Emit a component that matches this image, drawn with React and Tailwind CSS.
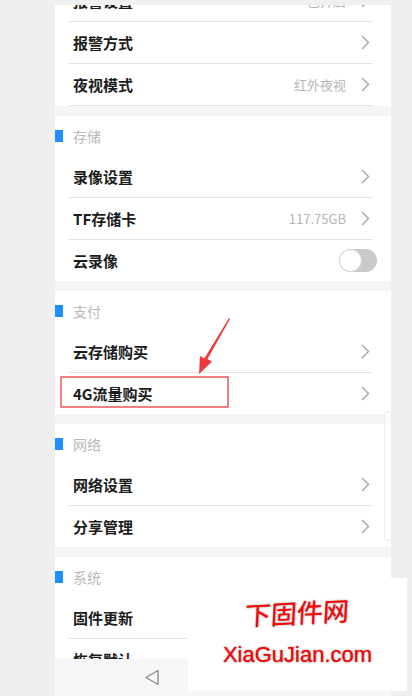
import React from 'react';

const font = { fontFamily: '"Noto Sans CJK SC", "Noto Sans", sans-serif' };

function Chevron() {
  return (
    <svg width="9" height="15" viewBox="0 0 9 15" fill="none" className="shrink-0">
      <path d="M1.5 1.5 L7.5 7.5 L1.5 13.5" stroke="#a3a3a3" strokeWidth="1.4" strokeLinecap="round" strokeLinejoin="round" />
    </svg>
  );
}

function Toggle() {
  return (
    <div className="w-[38px] h-[23px] rounded-full bg-[#c9c9c9] relative shrink-0 -mr-[7px]">
      <div className="absolute left-0 top-0 w-[23px] h-[23px] rounded-full bg-white border border-[#d6d6d6]" />
    </div>
  );
}

function Row({ label, value, toggle, divider }) {
  return (
    <div className="bg-white">
      <div className="h-[41px] flex items-center pl-[18px] pr-[21px]">
        <span className="flex-1 text-[15px] font-bold text-[#1c1c1c] leading-none">{label}</span>
        {value && <span className="text-[13px] text-[#b5b5b5] mr-[15px] leading-none">{value}</span>}
        {toggle ? <Toggle /> : <Chevron />}
      </div>
      {divider && <div className="ml-[14px] mr-[18px] h-px bg-[#e2e2e2]" />}
    </div>
  );
}

function Header({ title }) {
  return (
    <div className="h-[40px] bg-white flex items-center gap-[10px]">
      <div className="w-[8px] h-[12px] bg-[#1e8fff]" />
      <span className="text-[14px] text-[#b8b8b8] leading-none">{title}</span>
    </div>
  );
}

const Gap = () => <div className="h-[10px] bg-[#f5f5f5]" />;

const SECTIONS = [
  { title: '存储', rows: [{ label: '录像设置' }, { label: 'TF存储卡', value: '117.75GB' }, { label: '云录像', toggle: true }] },
  { title: '支付', rows: [{ label: '云存储购买' }, { label: '4G流量购买' }] },
  { title: '网络', rows: [{ label: '网络设置' }, { label: '分享管理' }] },
  { title: '系统', rows: [{ label: '固件更新' }, { label: '恢复默认' }] },
];

export default function App() {
  return (
    <div className="w-[412px] h-[696px] bg-[#efefef] flex overflow-hidden relative" style={font}>
      <div className="w-[55px] shrink-0" />
      <div className="w-[336px] h-[696px] relative overflow-hidden bg-white">
        <div className="-mt-[20px]">
          <Row label="报警设置" value="已开启" divider />
          <Row label="报警方式" divider />
          <Row label="夜视模式" value="红外夜视" divider />
          {SECTIONS.map((s) => (
            <div key={s.title}>
              <Gap />
              <Header title={s.title} />
              {s.rows.map((r, i) => (
                <Row key={r.label} {...r} divider={i < s.rows.length - 1} />
              ))}
            </div>
          ))}
        </div>

        {/* top header strip */}
        <div className="absolute left-0 top-0 w-full h-[5px] bg-[#f0f0f0]" />

        {/* bottom nav bar */}
        <div className="absolute left-0 bottom-0 w-full h-[37px] bg-[#f7f7f7] flex items-center pl-[89px]">
          <svg width="16" height="17" viewBox="0 0 16 17" fill="none">
            <path d="M14 1.5 L14 15.5 L2 8.5 Z" stroke="#8a8a8a" strokeWidth="1.4" strokeLinejoin="round" />
          </svg>
        </div>

        {/* faint card outline on right */}
        <div className="absolute left-[329px] top-[411px] w-[20px] h-[130px] rounded-l-[4px] border border-[#ececec] bg-white/60" />
      </div>

      {/* red highlight box */}
      <svg className="absolute left-[60px] top-[376px]" width="170" height="33" viewBox="0 0 170 33">
        <rect x="1" y="1" width="167" height="30" fill="none" stroke="#f03a3a" strokeWidth="1.3" />
      </svg>

      {/* red arrow */}
      <svg className="absolute left-[190px] top-[315px]" width="45" height="62" viewBox="0 0 45 62">
        <path d="M39 3 L40 4 L17.5 44 L22 46.5 L9 59 L10 41 L14.3 43.5 Z" fill="#ee3a3a" />
      </svg>

      {/* watermark */}
      <div className="absolute left-[188px] top-[578px] w-[219px] h-[113px] bg-white flex flex-col items-center pt-[21px]">
        <span
          className="text-[26px] leading-none text-[#f00] font-normal tracking-[0px] -skew-x-6 -rotate-3"
          style={{ textShadow: '0 0 2px #888, 0 0 1px #aaa' }}
        >
          下固件网
        </span>
        <span
          className="mt-[19px] text-[22px] leading-none text-[#f00]"
          style={{ fontFamily: '"Liberation Sans", Arial, sans-serif', textShadow: '0 0 2px #888, 0 0 1px #aaa' }}
        >
          XiaGuJian.com
        </span>
      </div>
    </div>
  );
}
